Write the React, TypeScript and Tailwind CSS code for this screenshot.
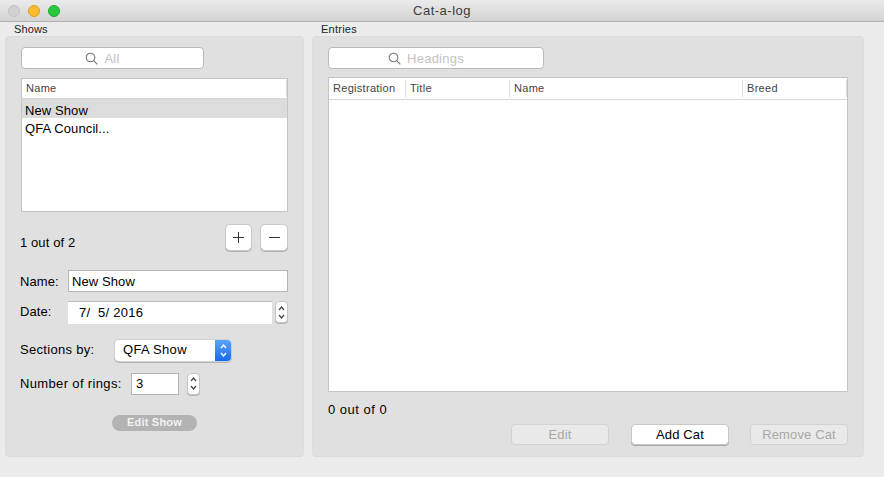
import React from "react";

const Stepper = ({ className = "" }: { className?: string }) => (
  <div className={`flex h-[22px] w-[13px] flex-col items-center justify-center gap-[3px] rounded-[4px] border border-[#c4c4c4] bg-white shadow-[0_1px_0_#b5b5b5] ${className}`}>
    <svg width="7" height="5" viewBox="0 0 7 5" fill="none" stroke="#444" strokeWidth="1.2"><path d="M1 4l2.5-3L6 4" /></svg>
    <svg width="7" height="5" viewBox="0 0 7 5" fill="none" stroke="#444" strokeWidth="1.2"><path d="M1 1l2.5 3L6 1" /></svg>
  </div>
);

const Search = ({ label, className }: { label: string; className: string }) => (
  <div className={`flex h-[22px] items-center justify-center gap-[6px] rounded-[4px] border border-[#b9b9b9] bg-white pr-[20px] ${className}`}>
    <svg width="13" height="13" viewBox="0 0 13 13" fill="none" stroke="#777" strokeWidth="1.1">
      <circle cx="5.5" cy="5.5" r="4.3" />
      <path d="M8.7 8.7l3.6 3.6" />
    </svg>
    <span className="pt-px text-[13px] tracking-[0.25px] text-[#c2c2c2]">{label}</span>
  </div>
);

const Header = ({ label, className }: { label: string; className: string }) => (
  <div className={`flex h-[17px] items-center border-r border-[#dcdcdc] pl-[4px] text-[11px] tracking-[0.3px] text-[#444] ${className}`}>{label}</div>
);

const Btn = ({ label, off, className = "" }: { label: string; off?: boolean; className?: string }) => (
  <div className={`flex h-[21px] w-[98px] items-center justify-center rounded-[4px] text-[13px] tracking-[0.15px] ${off ? "border border-[#d2d2d2] bg-[#e9e9e9] text-[#a8a8a8]" : "border border-[#c8c8c8] bg-white text-black shadow-[0_1px_0_#a9a9a9]"} ${className}`}>{label}</div>
);

export default function App() {
  return (
    <div className="flex h-[477px] w-[884px] flex-col overflow-hidden bg-[#ececec] text-black" style={{ fontFamily: '"Liberation Sans", Arial, sans-serif' }}>
      <div className="relative flex h-[22px] shrink-0 items-center justify-center border-b border-[#b1b1b1] bg-gradient-to-b from-[#ebebeb] to-[#d3d3d3] text-[13px] tracking-[0.5px] text-[#3c3c3c]">
        <div className="absolute left-[8px] top-[5px] flex gap-[8px]">
          <span className="h-[12px] w-[12px] rounded-full border border-[#c2c2c2] bg-[#d2d2d2]" />
          <span className="h-[12px] w-[12px] rounded-full border border-[#dfa023] bg-[#fdbc2e]" />
          <span className="h-[12px] w-[12px] rounded-full border border-[#1fa62e] bg-[#28c83f]" />
        </div>
        Cat-a-log
      </div>

      <div className="flex pl-[5px]">
        {/* Shows */}
        <div className="w-[299px] shrink-0">
          <div className="flex h-[14px] items-center pl-[9px] text-[11px] tracking-[0.15px] text-[#222]">Shows</div>
          <div className="h-[421px] rounded-[4px] border border-[#dcdcdc] bg-[#e0e0e0] pl-[15px] pr-[15px] pt-[10px] text-[13px] tracking-[0.1px]">
            <Search label="All" className="w-[183px]" />
            <div className="mt-[9px] h-[134px] border border-[#c4c4c4] bg-white">
              <div className="h-[20px] border-b border-[#d8d8d8] pt-px">
                <Header label="Name" className="w-full" />
              </div>
              <div className="flex h-[19px] items-center bg-[#dcdcdc] pl-[3px] pt-[4px]">New Show</div>
              <div className="flex h-[19px] items-center pl-[3px] pt-[3px]">QFA Council...</div>
            </div>
            <div className="mt-[12px] flex items-start justify-between">
              <span className="-ml-px mt-[9px]">1 out of 2</span>
              <div className="flex gap-[8px]">
                <div className="flex h-[27px] w-[27px] items-center justify-center rounded-[5px] border border-[#c8c8c8] bg-white shadow-[0_1px_0_#b0b0b0]">
                  <svg width="11" height="11" viewBox="0 0 11 11" stroke="#333" strokeWidth="1"><path d="M5.5 0v11M0 5.5h11" /></svg>
                </div>
                <div className="flex h-[27px] w-[28px] items-center justify-center rounded-[5px] border border-[#c8c8c8] bg-white shadow-[0_1px_0_#b0b0b0]">
                  <svg width="11" height="11" viewBox="0 0 11 11" stroke="#333" strokeWidth="1"><path d="M0 5.5h11" /></svg>
                </div>
              </div>
            </div>
            <div className="-ml-px mt-[18px] flex h-[21px] items-center">
              <span className="w-[48px] shrink-0 pt-px">Name:</span>
              <div className="flex h-[22px] flex-1 items-center border border-[#b4b4b4] bg-white pl-[3px] pt-px">New Show</div>
            </div>
            <div className="-ml-px mt-[9px] flex h-[23px] items-center">
              <span className="w-[48px] shrink-0">Date:</span>
              <div className="flex h-[23px] w-[204px] items-center whitespace-pre border-t border-[#bdbdbd] bg-white pl-[11px] tracking-[0.25px]">7/  5/ 2016</div>
              <Stepper className="ml-[3px]" />
            </div>
            <div className="-ml-px mt-[16px] flex h-[21px] items-center">
              <span className="w-[95px] shrink-0 tracking-[0.3px]">Sections by:</span>
              <div className="flex h-[21px] w-[116px] overflow-hidden rounded-[4px] bg-white shadow-[0_0_0_1px_#d0d0d0,0_1px_0_1px_#b5b5b5]">
                <span className="flex-1 self-center pl-[8px] tracking-[0.3px]">QFA Show</span>
                <div className="flex w-[16px] flex-col items-center justify-center gap-[3px] bg-gradient-to-b from-[#5aa3fb] to-[#1769f0]">
                  <svg width="7" height="5" viewBox="0 0 7 5" fill="none" stroke="#fff" strokeWidth="1.3"><path d="M1 4l2.5-3L6 4" /></svg>
                  <svg width="7" height="5" viewBox="0 0 7 5" fill="none" stroke="#fff" strokeWidth="1.3"><path d="M1 1l2.5 3L6 1" /></svg>
                </div>
              </div>
            </div>
            <div className="-ml-px mt-[12px] flex h-[22px] items-center">
              <span className="w-[111px] shrink-0 tracking-[0.35px]">Number of rings:</span>
              <div className="flex h-[22px] w-[48px] items-center border border-[#b4b4b4] bg-white pl-[4px]">3</div>
              <Stepper className="ml-[8px]" />
            </div>
            <div className="ml-[91px] mt-[20px] flex h-[16px] w-[85px] items-center justify-center rounded-full bg-[#b3b3b3] text-[11px] font-bold tracking-[0.2px] text-[#f2f2f2]">Edit Show</div>
          </div>
        </div>

        {/* Entries */}
        <div className="ml-[8px] w-[552px] shrink-0">
          <div className="flex h-[14px] items-center pl-[9px] text-[11px] tracking-[0.25px] text-[#222]">Entries</div>
          <div className="h-[421px] rounded-[4px] border border-[#dcdcdc] bg-[#e0e0e0] pl-[15px] pr-[15px] pt-[10px]">
            <Search label="Headings" className="w-[216px]" />
            <div className="mt-[8px] h-[315px] border border-[#c4c4c4] bg-white">
              <div className="flex h-[22px] border-b border-[#d8d8d8] pt-[2px]">
                <Header label="Registration" className="w-[77px]" />
                <Header label="Title" className="w-[104px]" />
                <Header label="Name" className="w-[233px]" />
                <Header label="Breed" className="flex-1" />
              </div>
            </div>
            <div className="mt-[10px] flex h-[15px] items-center text-[13px] tracking-[0.5px]">0 out of 0</div>
            <div className="mt-[7px] flex justify-end gap-[21px]">
              <Btn label="Edit" off className="mr-px" />
              <Btn label="Add Cat" />
              <Btn label="Remove Cat" off />
            </div>
          </div>
        </div>
      </div>
    </div>
  );
}
